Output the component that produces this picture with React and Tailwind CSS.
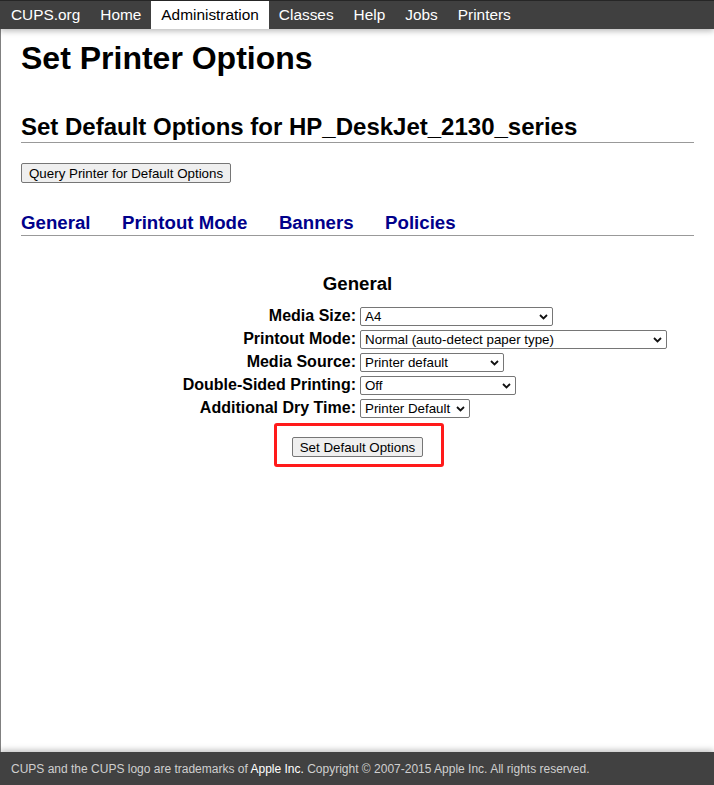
import React from "react";

const navItems = ["CUPS.org", "Home", "Administration", "Classes", "Help", "Jobs", "Printers"];

function Chevron() {
  return (
    <svg className="pointer-events-none absolute right-[5px] top-1/2 -translate-y-1/2" width="9" height="6" viewBox="0 0 9 6" fill="none">
      <path d="M1 1 L4.5 4.5 L8 1" stroke="#111" strokeWidth="1.8" />
    </svg>
  );
}

function FakeSelect({ value, width }) {
  return (
    <div className="relative" style={{ width }}>
      <select
        defaultValue={value}
        className="block w-full h-[19px] appearance-none border border-[#767676] rounded-[2px] bg-white pl-[4px] pr-[18px] text-[13.33px] leading-[15px] text-black"
      >
        <option>{value}</option>
      </select>
      <Chevron />
    </div>
  );
}

const rows = [
  ["Media Size:", "A4", 193],
  ["Printout Mode:", "Normal (auto-detect paper type)", 307],
  ["Media Source:", "Printer default", 144],
  ["Double-Sided Printing:", "Off", 156],
  ["Additional Dry Time:", "Printer Default", 110],
];

export default function App() {
  return (
    <div className="min-h-screen flex flex-col bg-white font-['Liberation_Sans',Arial,sans-serif] text-black">
      <nav className="relative z-10 h-[29px] flex bg-[#404040] border-t border-[#262626] shadow-[0_2px_6px_rgba(0,0,0,0.28)]">
        <div className="flex pl-[1px]">
          {navItems.map((n) => (
            <div
              key={n}
              className={
                "h-[28px] px-[10px] flex items-center text-[15.4px] " +
                (n === "Administration" ? "bg-white text-black" : "text-white")
              }
            >
              {n}
            </div>
          ))}
        </div>
      </nav>

      <main className="flex-1 border-l border-[#808080] pl-[20px] pr-[20px]">
        <h1 className="mt-[11px] text-[32px] leading-[37px] font-bold">Set Printer Options</h1>

        <h2 className="mt-[36px] text-[24px] leading-[28px] font-bold pb-[1px] border-b border-[#999]">
          Set Default Options for HP_DeskJet_2130_series
        </h2>

        <div className="mt-[20px] flex">
          <button className="block h-[20px] px-[7px] border border-[#767676] rounded-[2px] bg-[#efefef] text-[13.33px] leading-[15px] text-black">
            Query Printer for Default Options
          </button>
        </div>

        <div className="mt-[29px] flex gap-[31.5px] pb-[2px] border-b border-[#999] text-[18.67px] leading-[21px] font-bold text-[#00008b]">
          <a>General</a>
          <a>Printout Mode</a>
          <a>Banners</a>
          <a>Policies</a>
        </div>

        <h3 className="mt-[37px] text-center text-[18.67px] leading-[21px] font-bold">General</h3>

        <div className="mt-[11px] grid grid-cols-[335px_auto] gap-x-[4px]">
          {rows.map(([label, value, w]) => (
            <React.Fragment key={label}>
              <div className="h-[23px] flex items-center justify-end text-[16px] leading-[18px] font-bold pb-[1px]">
                {label}
              </div>
              <div className="h-[23px] flex items-center">
                <FakeSelect value={value} width={w} />
              </div>
            </React.Fragment>
          ))}
        </div>

        <div className="mt-[17px] flex justify-center">
          <div className="relative flex">
            <button className="block h-[20px] px-[7px] border border-[#767676] rounded-[2px] bg-[#efefef] text-[13.33px] leading-[15px] text-black">
              Set Default Options
            </button>
            <div className="absolute -left-[18px] -right-[21px] -top-[14px] -bottom-[10px] border-[3px] border-[#ff1a1a] rounded-[3px] pointer-events-none" />
          </div>
        </div>
      </main>

      <footer className="relative z-10 h-[33px] flex items-center px-[11px] bg-[#414141] shadow-[0_-2px_6px_rgba(0,0,0,0.25)] text-[12px] leading-[14px] text-[#cfcfcf]">
        <span>
          CUPS and the CUPS logo are trademarks of <span className="text-white">Apple Inc.</span> Copyright © 2007-2015 Apple Inc. All rights reserved.
        </span>
      </footer>
    </div>
  );
}
